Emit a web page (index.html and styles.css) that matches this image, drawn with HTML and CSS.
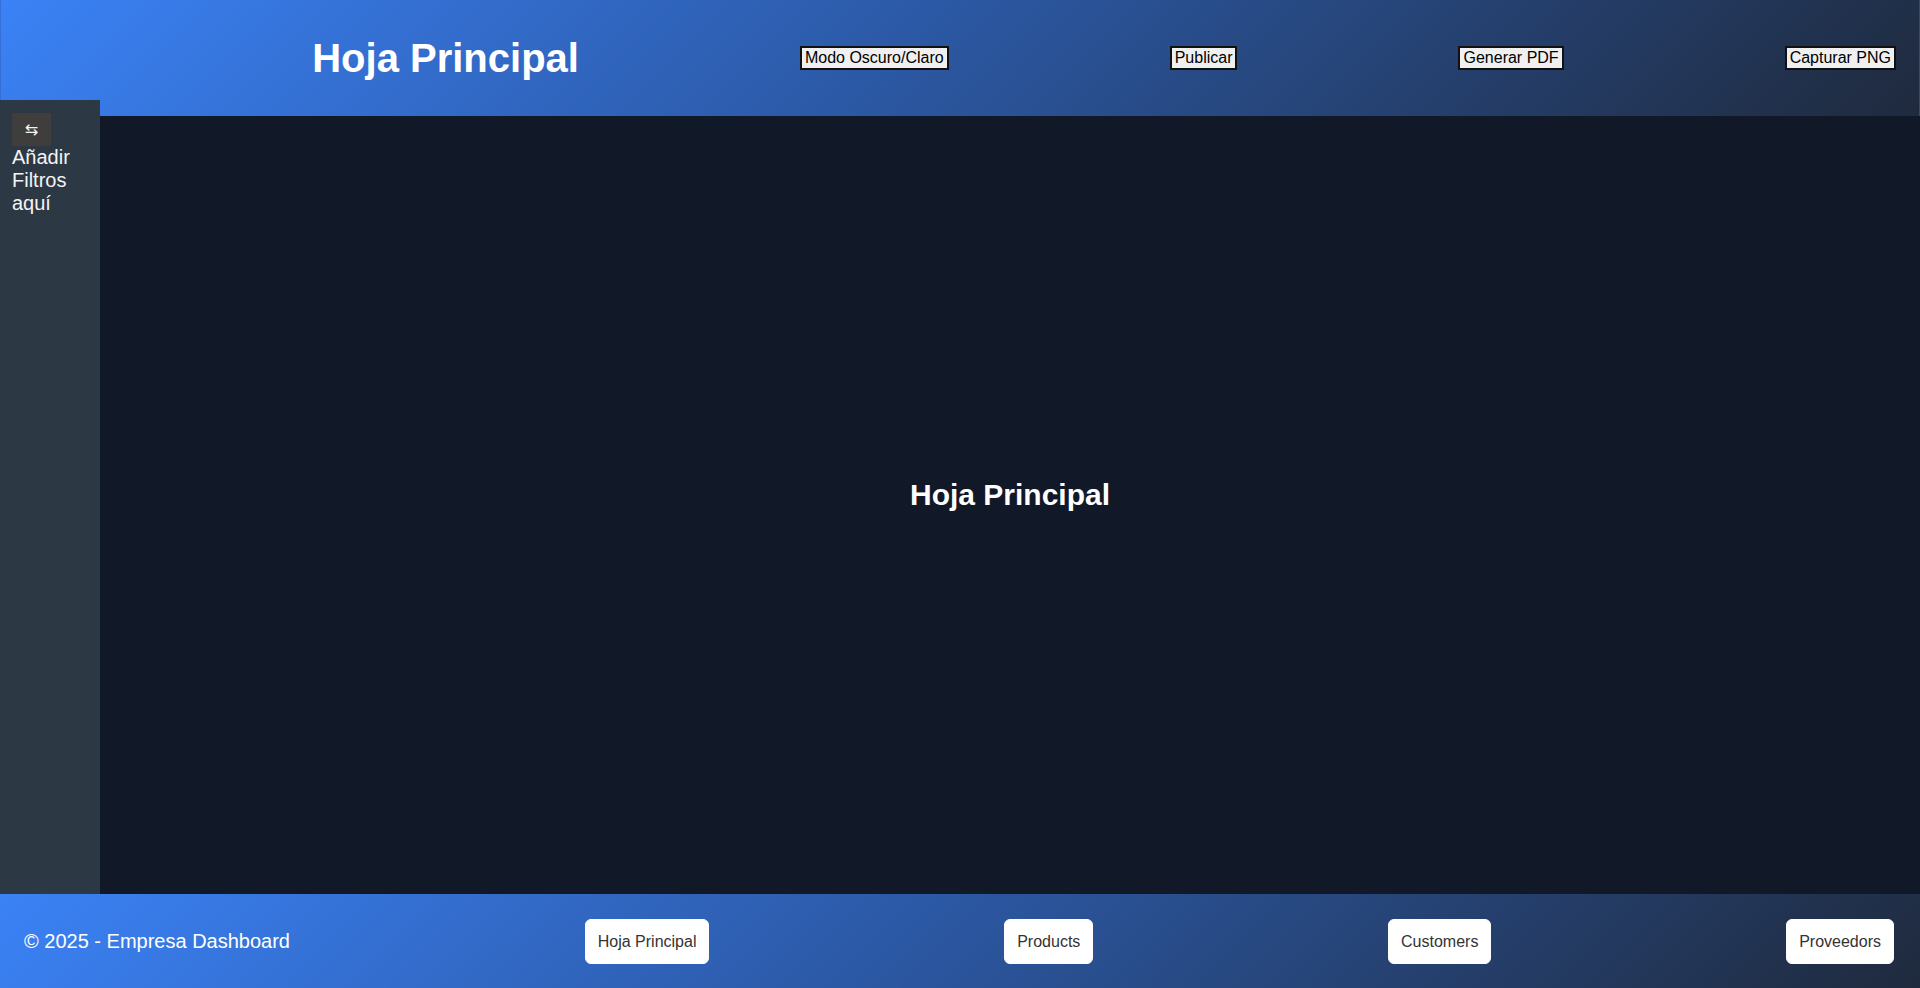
FILE: index.html
```html
<!DOCTYPE html>
<html lang="es">
<head>
<meta charset="utf-8">
<title>Hoja Principal</title>
<link rel="stylesheet" href="styles.css">
</head>
<body>
<div class="app">
  <header class="topbar">
    <h1 class="topbar-title">Hoja Principal</h1>
    <button class="tool-btn">Modo Oscuro/Claro</button>
    <button class="tool-btn">Publicar</button>
    <button class="tool-btn">Generar PDF</button>
    <button class="tool-btn">Capturar PNG</button>
  </header>
  <div class="middle">
    <aside class="sidebar">
      <button class="toggle-btn">&#8646;</button>
      <p class="filters">Añadir Filtros aquí</p>
    </aside>
    <main class="content">
      <h2 class="content-title">Hoja Principal</h2>
    </main>
  </div>
  <footer class="bottombar">
    <span class="copyright">© 2025 - Empresa Dashboard</span>
    <button class="nav-btn">Hoja Principal</button>
    <button class="nav-btn">Products</button>
    <button class="nav-btn">Customers</button>
    <button class="nav-btn">Proveedors</button>
  </footer>
</div>
</body>
</html>
```

FILE: styles.css
```css
* { box-sizing: border-box; }

html, body {
  margin: 0;
  padding: 0;
  height: 100%;
}

body {
  font-family: "Liberation Sans", Arial, sans-serif;
  background: #111827;
  color: #ffffff;
  overflow: hidden;
}

.app {
  display: flex;
  flex-direction: column;
  height: 100vh;
}

.topbar {
  flex: 0 0 116px;
  display: flex;
  align-items: center;
  justify-content: flex-end;
  gap: 221px;
  padding: 0 23px 0 0;
  background: linear-gradient(135deg, #3b82f6 0%, #2c5aa8 45%, #1f2a3d 100%);
  border-left: 1px solid #3270d8;
  border-right: 1px solid #3a4a66;
}

.topbar-title {
  margin: 0;
  font-size: 40px;
  font-weight: 700;
  color: #ffffff;
  line-height: 1.15;
}

.tool-btn {
  font-family: "Liberation Sans", Arial, sans-serif;
  font-size: 16px;
  line-height: 18px;
  color: #000000;
  background: #f0f0f0;
  border: 2px solid #111111;
  padding: 1px 3px;
  border-radius: 0;
}

.middle {
  flex: 1 1 auto;
  display: flex;
  min-height: 0;
}

.sidebar {
  position: relative;
  z-index: 1;
  margin-top: -16px;
  flex: 0 0 100px;
  background: #2d3845;
  padding: 13px 12px;
}

.toggle-btn {
  display: block;
  width: 39px;
  height: 33px;
  padding: 0;
  border: none;
  background: #3f3e3d;
  color: #f2f2f2;
  font-family: "DejaVu Sans", sans-serif;
  font-size: 16px;
}

.filters {
  margin: 0;
  font-size: 20px;
  line-height: 23px;
  color: #f4f4f4;
}

.content {
  flex: 1 1 auto;
  display: flex;
  align-items: center;
  justify-content: center;
  padding-bottom: 20px;
  background: #111827;
}

.content-title {
  margin: 0;
  font-size: 30px;
  font-weight: 700;
  color: #ffffff;
  line-height: 1.15;
}

.bottombar {
  flex: 0 0 94px;
  display: flex;
  align-items: center;
  justify-content: space-between;
  padding: 0 26px 0 24px;
  background: linear-gradient(135deg, #3b82f6 0%, #2c5aa8 45%, #1f2a3d 100%);
}

.copyright {
  font-size: 20px;
  color: #ffffff;
}

.nav-btn {
  font-family: "Liberation Sans", Arial, sans-serif;
  font-size: 16px;
  line-height: 18px;
  color: #333333;
  background: #ffffff;
  border: 1px solid #ffffff;
  border-radius: 6px;
  padding: 13px 12px 12px;
}
```
